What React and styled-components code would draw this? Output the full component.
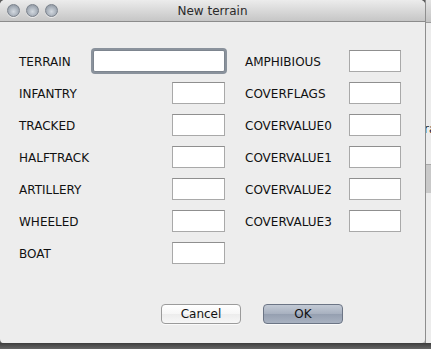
import React from 'react';
import styled, { createGlobalStyle } from 'styled-components';

const GlobalStyle = createGlobalStyle`
  html, body { margin: 0; padding: 0; }
  body {
    width: 431px;
    height: 349px;
    overflow: hidden;
    font-family: "DejaVu Sans", "Liberation Sans", sans-serif;
    background: #5b5b5b;
  }
`;

const Desktop = styled.div`
  display: grid;
  grid-template-columns: 425px 6px;
  grid-template-rows: 343px 6px;
  width: 431px;
  height: 349px;
`;

const SideStrip = styled.div`
  display: flex;
  flex-direction: column;
  background: #ececec;
  border-left: 1px solid #8e8e8e;
  overflow: hidden;
  font-size: 12px;
  color: #222;
`;

const StripTop = styled.div`
  height: 22px;
  background: linear-gradient(#e4e4e4, #c4c4c4);
  border-bottom: 1px solid #9a9a9a;
`;

const StripText = styled.div`
  margin-top: 99px;
  margin-left: -2px;
  white-space: nowrap;
`;

const StripBand = styled.div`
  margin-top: 28px;
  height: 28px;
  background: #c9c9c9;
  border-top: 1px solid #a8a8a8;
`;

const BottomStrip = styled.div`
  grid-column: 1 / 3;
  background: linear-gradient(#3c3c3c, #666);
`;

const Window = styled.div`
  display: flex;
  flex-direction: column;
  background: #ededed;
  border-radius: 5px 5px 4px 4px;
  overflow: hidden;
  box-shadow: 1px 1px 0 #b5b5b5;
`;

const TitleBar = styled.div`
  position: relative;
  display: flex;
  align-items: center;
  height: 21px;
  background: linear-gradient(#ececec, #c6c6c6);
  border-bottom: 1px solid #8c8c8c;
`;

const Lights = styled.div`
  display: flex;
  gap: 6px;
  padding-left: 7px;
`;

const Light = styled.span`
  width: 13px;
  height: 13px;
  border-radius: 50%;
  box-sizing: border-box;
  border: 1px solid #7a828c;
  background: radial-gradient(circle at 50% 60%, #d4dae1 0%, #a7afb9 55%, #828a95 100%);
  box-shadow: 0 1px 0 rgba(255, 255, 255, 0.6);
`;

const Title = styled.div`
  position: absolute;
  left: 0;
  right: 0;
  text-align: center;
  font-size: 12px;
  color: #2a2a2a;
  pointer-events: none;
`;

const Body = styled.div`
  flex: 1;
  display: flex;
  flex-direction: column;
  padding: 28px 0 19px 19px;
`;

const Form = styled.div`
  display: grid;
  grid-template-columns: 206px 156px;
  column-gap: 20px;
`;

const Column = styled.div`
  display: flex;
  flex-direction: column;
  gap: 10px;
`;

const Row = styled.div`
  display: flex;
  align-items: center;
  height: 22px;
`;

const Label = styled.span`
  flex: 1;
  font-size: 12px;
  color: #111;
  padding-top: 1px;
`;

const Field = styled.div`
  box-sizing: border-box;
  width: ${p => p.$w}px;
  height: 22px;
  background: #fff;
  border: 1px solid #a9a9a9;
  border-top-color: #8f8f8f;
  ${p => p.$focus && `
    border-color: #7d858f;
    border-radius: 2px;
    box-shadow: 0 0 0 2px #8a929c;
  `}
`;

const Footer = styled.div`
  margin-top: auto;
  display: flex;
  justify-content: flex-end;
  gap: 22px;
  padding-right: 82px;
`;

const Button = styled.div`
  box-sizing: border-box;
  width: 80px;
  height: 20px;
  display: flex;
  align-items: center;
  justify-content: center;
  font-size: 12px;
  color: #111;
  border-radius: 4px;
  border: 1px solid ${p => (p.$primary ? '#6c7585' : '#9b9b9b')};
  background: ${p =>
    p.$primary
      ? 'linear-gradient(#c3cad5, #a7b0bf 50%, #959fb0 51%, #a9b2c1)'
      : 'linear-gradient(#ffffff, #f6f6f6 50%, #ececec 51%, #f7f7f7)'};
  box-shadow: 0 1px 0 rgba(255, 255, 255, 0.7);
`;

const leftRows = [
  { label: 'TERRAIN', w: 132, focus: true },
  { label: 'INFANTRY', w: 53 },
  { label: 'TRACKED', w: 53 },
  { label: 'HALFTRACK', w: 53 },
  { label: 'ARTILLERY', w: 53 },
  { label: 'WHEELED', w: 53 },
  { label: 'BOAT', w: 53 },
];

const rightRows = ['AMPHIBIOUS', 'COVERFLAGS', 'COVERVALUE0', 'COVERVALUE1', 'COVERVALUE2', 'COVERVALUE3'];

export default function App() {
  return (
    <>
      <GlobalStyle />
      <Desktop>
        <Window>
          <TitleBar>
            <Lights>
              <Light />
              <Light />
              <Light />
            </Lights>
            <Title>New terrain</Title>
          </TitleBar>
          <Body>
            <Form>
              <Column>
                {leftRows.map(r => (
                  <Row key={r.label}>
                    <Label>{r.label}</Label>
                    <Field $w={r.w} $focus={r.focus} />
                  </Row>
                ))}
              </Column>
              <Column>
                {rightRows.map(l => (
                  <Row key={l}>
                    <Label>{l}</Label>
                    <Field $w={52} />
                  </Row>
                ))}
              </Column>
            </Form>
            <Footer>
              <Button>Cancel</Button>
              <Button $primary>OK</Button>
            </Footer>
          </Body>
        </Window>
        <SideStrip>
          <StripTop />
          <StripText>ra</StripText>
          <StripBand />
        </SideStrip>
        <BottomStrip />
      </Desktop>
    </>
  );
}
